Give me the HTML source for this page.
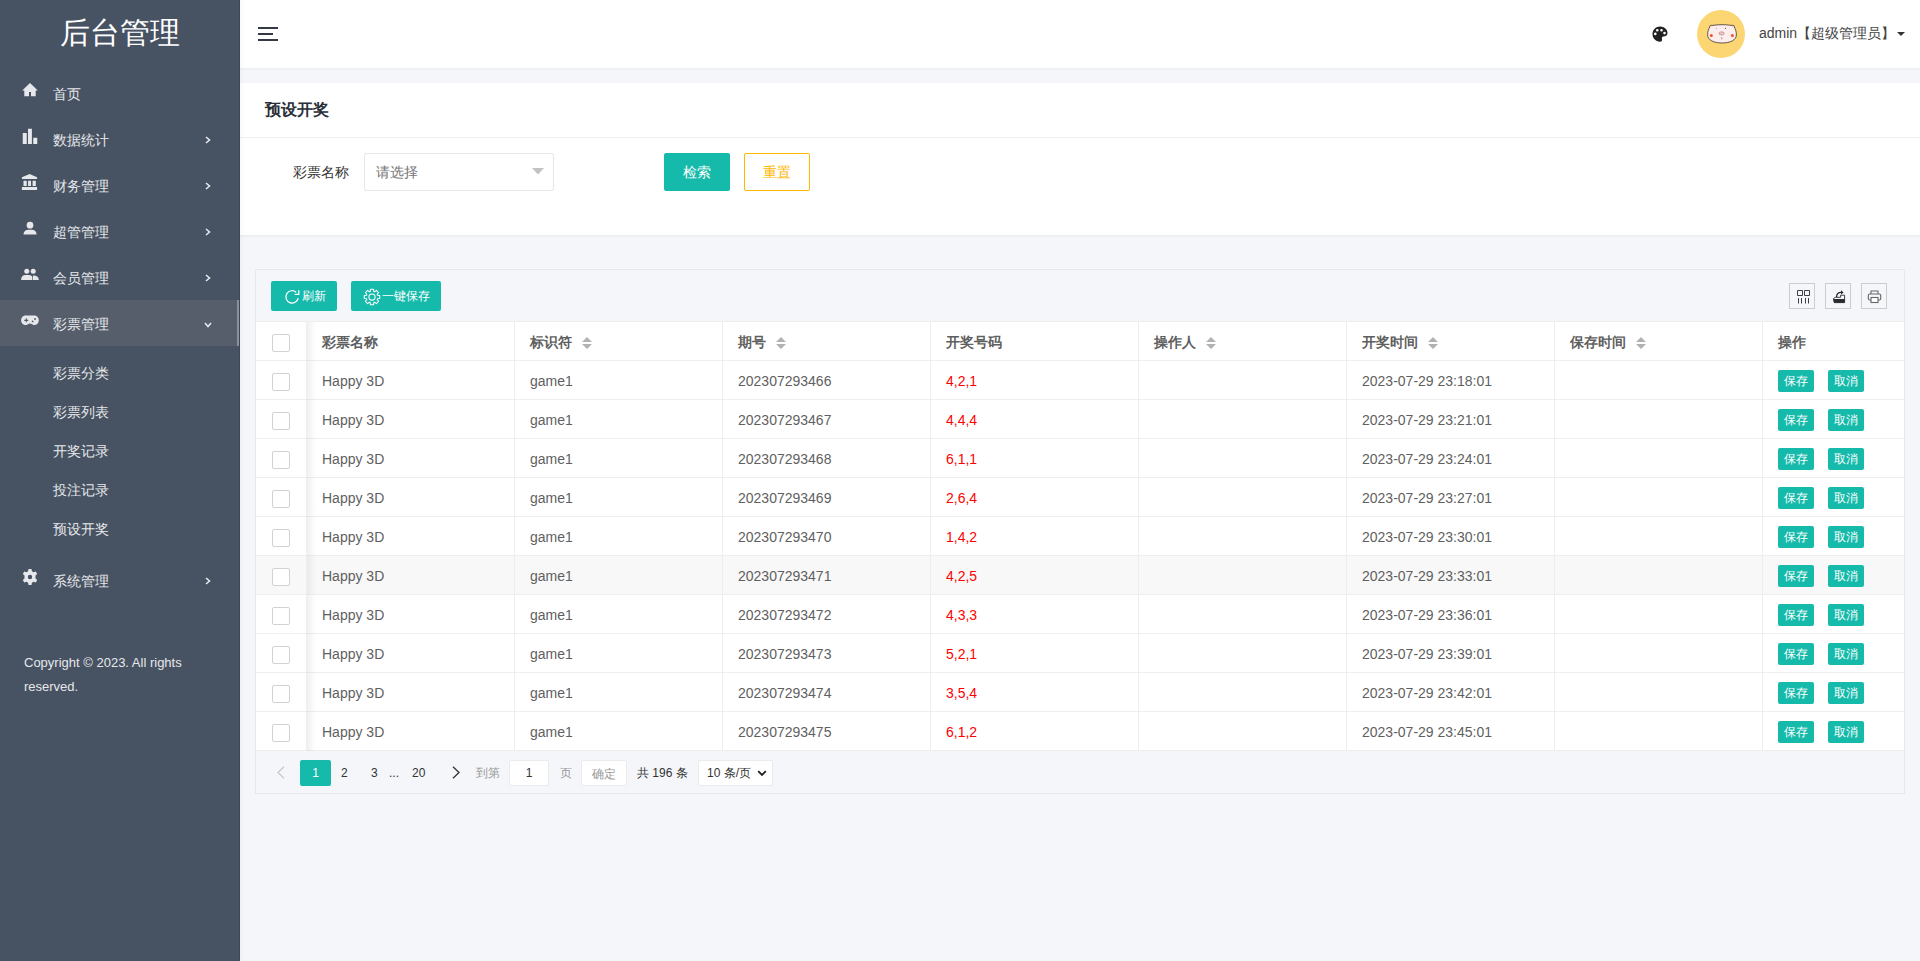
<!DOCTYPE html>
<html><head><meta charset="utf-8">
<style>
*{box-sizing:border-box;margin:0;padding:0}
html,body{width:1920px;height:961px;overflow:hidden}
body{font-family:"Liberation Sans",sans-serif;font-size:14px;color:#333;background:#f4f6fa;position:relative}
.abs{position:absolute}
#side{position:absolute;left:0;top:0;width:240px;height:961px;background:#475262;color:#e6e8eb}
#logo{position:absolute;left:0;top:0;width:240px;height:70px;text-align:center;line-height:66px;font-size:30px;color:#fff}
.mi{position:absolute;left:0;width:240px;height:46px;line-height:46px}
.mi .ic{position:absolute;left:22px;top:15px;width:18px;height:16px}
.mi .tx{position:absolute;left:53px;top:1px;font-size:14px;font-weight:500}
.mi .ar{position:absolute;left:205px;top:20px;width:6px;height:8px}
.act{background:#565e6c}
.act .bar{position:absolute;right:0;top:0;width:3px;height:46px;background:#8a919c}
.si{position:absolute;left:53px;height:39px;line-height:39px;font-size:14px;font-weight:500}
#copy{position:absolute;left:24px;top:651px;width:200px;font-size:13px;line-height:24px;color:#e6e8eb}
#hdr{position:absolute;left:240px;top:0;width:1680px;height:68px;background:#fff}
#card1{position:absolute;left:240px;top:83px;width:1680px;height:152px;background:#fff}
#card2{position:absolute;left:255px;top:269px;width:1650px;height:525px;border:1px solid #e8e8e8;background:#f4f6fa}
.btn{position:absolute;background:#16baaa;color:#fff;border-radius:2px;text-align:center;font-weight:500}
.tb{position:absolute;left:0;width:1648px;background:#fff}
.row{position:absolute;left:0;width:1648px;height:39px;border-bottom:1px solid #eee;background:#fff}
.cell{position:absolute;top:1px;height:38px;line-height:38px;color:#5f5f5f;white-space:nowrap}
.vl{position:absolute;top:0;width:1px;height:39px;background:#eee}
.th .cell{font-weight:bold;color:#5f5f5f}
.cb{position:absolute;left:16px;top:12px;width:18px;height:18px;border:1px solid #d2d2d2;border-radius:2px;background:#fff}
.sort{position:absolute;top:15px;width:10px;height:12px}
.red{color:#f00 !important}
.ob{position:absolute;top:9px;width:36px;height:22px;line-height:22px;font-size:12px;font-weight:500;background:#16baaa;color:#fff;border-radius:2px;text-align:center}
.hover{background:#f8f8f8}
.tool{position:absolute;top:13px;width:26px;height:26px;border:1px solid #ccc}
.pg{position:absolute;top:1px;height:42px;line-height:42px;font-size:12px;color:#333}
</style></head><body>

<div id="side">
  <div id="logo">后台管理</div>
  <!-- menu -->
  <div class="mi" style="top:70px">
    <svg class="ic" viewBox="0 0 18 16" style="left:22px;top:13px"><path d="M8 0.1 L15.8 7.4 H13.7 V13.3 H9 V9 H7 V13.3 H2.3 V7.4 H0.2 Z" fill="#e6e8eb"/></svg>
    <span class="tx">首页</span>
  </div>
  <div class="mi" style="top:116px">
    <svg class="ic" viewBox="0 0 18 16" style="top:12px"><rect x="0.75" y="5" width="4" height="11" fill="#e6e8eb"/><rect x="6" y="0.75" width="3.9" height="15.25" fill="#e6e8eb"/><rect x="11.25" y="9.75" width="4" height="6.25" fill="#e6e8eb"/></svg>
    <span class="tx">数据统计</span>
    <svg class="ar" viewBox="0 0 6 8"><path d="M1 1 L4.5 4 L1 7" stroke="#e6e8eb" stroke-width="1.6" fill="none"/></svg>
  </div>
  <div class="mi" style="top:162px">
    <svg class="ic" viewBox="0 0 18 16" style="left:21px;top:12px"><path d="M8.6 0 L16.1 3.2 V5.1 H0.9 V3.2 Z" fill="#e6e8eb"/><rect x="2.5" y="6.75" width="3.2" height="5.25" fill="#e6e8eb"/><rect x="7.1" y="6.75" width="2.9" height="5.25" fill="#e6e8eb"/><rect x="11.6" y="6.75" width="3.2" height="5.25" fill="#e6e8eb"/><rect x="0.9" y="13" width="15.2" height="3" fill="#e6e8eb"/></svg>
    <span class="tx">财务管理</span>
    <svg class="ar" viewBox="0 0 6 8"><path d="M1 1 L4.5 4 L1 7" stroke="#e6e8eb" stroke-width="1.6" fill="none"/></svg>
  </div>
  <div class="mi" style="top:208px">
    <svg class="ic" viewBox="0 0 18 16" style="top:13px"><circle cx="8" cy="4.2" r="3.35" fill="#e6e8eb"/><path d="M1.5 13.4 C1.5 10.4 3.5 8.7 6.5 8.7 H9.6 C12.6 8.7 14.6 10.4 14.6 13.4 Z" fill="#e6e8eb"/></svg>
    <span class="tx">超管管理</span>
    <svg class="ar" viewBox="0 0 6 8"><path d="M1 1 L4.5 4 L1 7" stroke="#e6e8eb" stroke-width="1.6" fill="none"/></svg>
  </div>
  <div class="mi" style="top:254px">
    <svg class="ic" viewBox="0 0 18 16" style="left:21px;top:14px"><circle cx="5.75" cy="3.3" r="2.5" fill="#e6e8eb"/><circle cx="12.2" cy="3.3" r="2.5" fill="#e6e8eb"/><path d="M0.1 12 C0.1 8.6 1.8 7 4.5 7 H7.8 C9.6 7 10.9 7.8 11.4 9 V12 Z" fill="#e6e8eb"/><path d="M12 12 V7.4 C15.6 7.2 17.8 8.8 17.8 12 Z" fill="#e6e8eb"/></svg>
    <span class="tx">会员管理</span>
    <svg class="ar" viewBox="0 0 6 8"><path d="M1 1 L4.5 4 L1 7" stroke="#e6e8eb" stroke-width="1.6" fill="none"/></svg>
  </div>
  <div class="mi act" style="top:300px">
    <svg class="ic" viewBox="0 0 18 16" style="left:21px;top:15px"><path d="M4.5 0.4 H13.3 C16 0.4 17.8 2.6 17.8 5.2 C17.8 8 15.8 10 13.3 10 C11.3 10 10.5 8.6 9 8.6 C7.5 8.6 6.7 10 4.7 10 C2.2 10 0.1 8 0.1 5.2 C0.1 2.6 2 0.4 4.5 0.4 Z" fill="#e6e8eb"/><path d="M3.2 5.4 H7.3 M5.3 3.3 V7.3" stroke="#565e6c" stroke-width="1.1"/><circle cx="11.6" cy="6.4" r="0.9" fill="#565e6c"/><circle cx="14" cy="4" r="0.95" fill="#565e6c"/></svg>
    <span class="tx">彩票管理</span>
    <svg class="ar" viewBox="0 0 8 6" style="left:204px;top:22px;width:8px;height:6px"><path d="M1 1 L4 4.5 L7 1" stroke="#e6e8eb" stroke-width="1.6" fill="none"/></svg>
    <div class="bar"></div>
  </div>
  <div class="si" style="top:354px">彩票分类</div>
  <div class="si" style="top:393px">彩票列表</div>
  <div class="si" style="top:432px">开奖记录</div>
  <div class="si" style="top:471px">投注记录</div>
  <div class="si" style="top:510px">预设开奖</div>
  <div class="mi" style="top:557px">
    <svg class="ic" viewBox="0 0 16 16" style="top:12px;width:16px;height:16px"><path fill="#e6e8eb" fill-rule="evenodd" d="M6.5 0 H9.5 L9.9 2.2 L11.6 3.2 L13.7 2.4 L15.2 5 L13.5 6.5 V9.5 L15.2 11 L13.7 13.6 L11.6 12.8 L9.9 13.8 L9.5 16 H6.5 L6.1 13.8 L4.4 12.8 L2.3 13.6 L0.8 11 L2.5 9.5 V6.5 L0.8 5 L2.3 2.4 L4.4 3.2 L6.1 2.2 Z M8 5.8 A2.2 2.2 0 1 0 8 10.2 A2.2 2.2 0 1 0 8 5.8 Z"/></svg>
    <span class="tx">系统管理</span>
    <svg class="ar" viewBox="0 0 6 8"><path d="M1 1 L4.5 4 L1 7" stroke="#e6e8eb" stroke-width="1.6" fill="none"/></svg>
  </div>
  <div class="abs" style="left:239px;top:0;width:1px;height:961px;background:#3e4757"></div>
  <div id="copy">Copyright © 2023. All rights reserved.</div>
</div>

<div id="hdr">
  <svg class="abs" style="left:18px;top:27px" width="20" height="14" viewBox="0 0 20 14"><rect x="0" y="0" width="20" height="2" fill="#333a44"/><rect x="0" y="6" width="15" height="2" fill="#333a44"/><rect x="0" y="12" width="20" height="2" fill="#333a44"/></svg>
  <svg class="abs" style="left:1412px;top:26px" width="16" height="16" viewBox="0 0 16 16"><path fill="#222" fill-rule="evenodd" d="M8 0.5 C12.5 0.5 15.5 3.5 15.5 7 C15.5 9.5 13.5 10.5 11.5 10.5 C10 10.5 9.5 11.5 10 13 C10.5 14.5 9.5 15.7 8 15.7 C3.5 15.7 0.5 12 0.5 8 C0.5 3.8 3.8 0.5 8 0.5 Z M3.3 6.6 A1.3 1.3 0 1 0 3.3 9.2 A1.3 1.3 0 1 0 3.3 6.6 Z M5.3 3 A1.3 1.3 0 1 0 5.3 5.6 A1.3 1.3 0 1 0 5.3 3 Z M9.5 3 A1.3 1.3 0 1 0 9.5 5.6 A1.3 1.3 0 1 0 9.5 3 Z M12.5 5.8 A1.3 1.3 0 1 0 12.5 8.4 A1.3 1.3 0 1 0 12.5 5.8 Z"/></svg>
  <div class="abs" style="left:1457px;top:10px;width:48px;height:48px;border-radius:50%;background:#fbd672"></div>
  <svg class="abs" style="left:1467px;top:23px" width="30" height="21" viewBox="0 0 30 21"><path d="M3.2 3.2 C7 1.2 23 1.2 26.8 3.2 C28.6 6 29.4 9 29.4 11.8 C29.4 17.2 23 20 15 20 C7 20 0.6 17.2 0.6 11.8 C0.6 9 1.4 6 3.2 3.2 Z" fill="#fdeeee" stroke="#3a2a2a" stroke-width="0.75"/><path d="M2.6 5 C2 3 3 1.8 5.6 2.3" fill="#f7d6d6" stroke="#3a2a2a" stroke-width="0.6"/><path d="M27.4 5 C28 3 27 1.8 24.4 2.3" fill="#f7d6d6" stroke="#3a2a2a" stroke-width="0.6"/><ellipse cx="14.6" cy="10.4" rx="2.6" ry="1.6" fill="#f4c4c4" stroke="#9a6a6a" stroke-width="0.5"/><circle cx="4.3" cy="12.6" r="1.5" fill="#f0522a"/><circle cx="25.4" cy="12.6" r="1.5" fill="#f0522a"/><circle cx="9.5" cy="5.2" r="0.45" fill="#555"/><circle cx="18.5" cy="5.2" r="0.55" fill="#333"/><path d="M14.4 14.5 C15.4 15 15 16.3 14.5 16" stroke="#333" stroke-width="0.6" fill="none"/></svg>
  <div class="abs" style="left:1519px;top:24px;line-height:18px;font-size:14px;color:#444">admin【超级管理员】</div>
  <svg class="abs" style="left:1657px;top:32px" width="8" height="4" viewBox="0 0 8 4"><path d="M0 0 H8 L4 4 Z" fill="#333"/></svg>
</div>

<div class="abs" style="left:240px;top:0;width:6px;height:961px;background:linear-gradient(to right,rgba(0,0,0,0.025),rgba(0,0,0,0));z-index:5"></div>
<div class="abs" style="left:240px;top:68px;width:1680px;height:2px;background:linear-gradient(to bottom,#eceef3,#f1f3f7)"></div>
<div id="card1">
  <div class="abs" style="left:25px;top:16px;font-size:16px;line-height:22px;color:#2a2f38;font-weight:bold">预设开奖</div>
  <div class="abs" style="left:0;top:54px;width:1680px;height:1px;background:#f2f2f2"></div>
  <div class="abs" style="left:53px;top:80px;line-height:18px;color:#333">彩票名称</div>
  <div class="abs" style="left:124px;top:70px;width:190px;height:38px;border:1px solid #e6e6e6;border-radius:2px;background:#fff">
    <span class="abs" style="left:11px;top:9px;line-height:18px;color:#757575">请选择</span>
    <svg class="abs" style="left:167px;top:14px" width="12" height="7" viewBox="0 0 12 7"><path d="M0 0 H12 L6 6.5 Z" fill="#c2c2c2"/></svg>
  </div>
  <div class="btn" style="left:424px;top:70px;width:66px;height:38px;line-height:38px">检索</div>
  <div class="abs" style="left:504px;top:70px;width:66px;height:38px;line-height:36px;border:1px solid #ffb800;border-radius:2px;color:#ffb800;text-align:center;background:#fff;font-weight:500">重置</div>
</div>

<div class="abs" style="left:240px;top:235px;width:1680px;height:3px;background:linear-gradient(to bottom,#eaecf0,#f4f6fa)"></div>
<div id="card2">
  <div class="btn" style="left:15px;top:11px;width:66px;height:30px;line-height:30px;font-size:12px">
    <svg class="abs" style="left:13px;top:8px" width="18" height="18" viewBox="0 0 18 18"><path d="M12.2 3.2 A6.2 6.2 0 1 0 14.2 9.1" stroke="#fff" stroke-width="1.25" fill="none"/><path d="M14.8 1.2 V5.3 H10.6" stroke="#fff" stroke-width="1.25" fill="none"/></svg>
    <span class="abs" style="left:31px;top:0">刷新</span>
  </div>
  <div class="btn" style="left:95px;top:11px;width:90px;height:30px;line-height:30px;font-size:12px">
    <svg class="abs" style="left:11px;top:6px" width="20" height="20" viewBox="0 0 20 20"><path fill="none" stroke="#fff" stroke-width="1.05" stroke-linejoin="round" d="M8.15 4.61 L8.43 2.26 L11.57 2.26 L11.85 4.61 L12.51 4.88 L14.36 3.42 L16.58 5.64 L15.12 7.49 L15.39 8.15 L17.74 8.43 L17.74 11.57 L15.39 11.85 L15.12 12.51 L16.58 14.36 L14.36 16.58 L12.51 15.12 L11.85 15.39 L11.57 17.74 L8.43 17.74 L8.15 15.39 L7.49 15.12 L5.64 16.58 L3.42 14.36 L4.88 12.51 L4.61 11.85 L2.26 11.57 L2.26 8.43 L4.61 8.15 L4.88 7.49 L3.42 5.64 L5.64 3.42 L7.49 4.88 Z"/><circle cx="10" cy="10" r="3.1" fill="none" stroke="#fff" stroke-width="1.05"/></svg>
    <span class="abs" style="left:31px;top:0">一键保存</span>
  </div>
  <div class="tool" style="left:1533px"><svg class="abs" style="left:6px;top:6px" width="15" height="15" viewBox="0 0 15 15"><path d="M1.5 0.5 H6.5 V5.5 H1.5 Z M8.5 0.5 H13.5 V5.5 H8.5 Z" fill="none" stroke="#3d3d4a" stroke-width="1"/><path d="M2.5 8 V13.5 M5.5 8 V13.5 M9.5 8 V13.5 M12.5 8 V13.5" stroke="#3d3d4a" stroke-width="1"/></svg></div>
  <div class="tool" style="left:1569px"><svg class="abs" style="left:5px;top:5px" width="16" height="16" viewBox="0 0 16 16"><path d="M2.4 9.6 L4.2 8.3 H9.6 V6.2 H13.6 V13.6 H3.2 Z" fill="none" stroke="#2a2a3a" stroke-width="0.9"/><path d="M2.3 10 H13.7 V13.8 H3.3 Z" fill="#2a2a2a"/><path d="M5.6 8 C5.4 4.8 7.4 3.3 10.4 3.4" fill="none" stroke="#2a2a2a" stroke-width="1.3"/><path d="M10 1.2 L12.6 3.4 L10 5.6 Z" fill="#2a2a2a"/></svg></div>
  <div class="tool" style="left:1605px"><svg class="abs" style="left:5px;top:5px" width="15" height="15" viewBox="0 0 15 15"><path d="M4 5 V2 H11 V5" fill="none" stroke="#666" stroke-width="1.1"/><rect x="1.3" y="5" width="12.4" height="6" rx="1.5" fill="none" stroke="#666" stroke-width="1.1"/><rect x="4" y="8.5" width="7" height="5" fill="#fff" stroke="#666" stroke-width="1.1"/></svg></div>

  <div class="abs" style="left:0;top:51px;width:1648px;height:1px;background:#eee"></div>
  <div id="tbl" class="abs" style="left:0;top:52px;width:1648px;height:429px;background:#fff">
<div class="row th" style="top:0"><div class="cb"></div><div class="cell" style="left:66px">彩票名称</div><div class="cell" style="left:274px">标识符</div><svg class="sort" style="left:326px" viewBox="0 0 10 12"><path d="M5 0 L10 5 H0 Z M0 7 H10 L5 12 Z" fill="#b2b2b2"/></svg><div class="cell" style="left:482px">期号</div><svg class="sort" style="left:520px" viewBox="0 0 10 12"><path d="M5 0 L10 5 H0 Z M0 7 H10 L5 12 Z" fill="#b2b2b2"/></svg><div class="cell" style="left:690px">开奖号码</div><div class="cell" style="left:898px">操作人</div><svg class="sort" style="left:950px" viewBox="0 0 10 12"><path d="M5 0 L10 5 H0 Z M0 7 H10 L5 12 Z" fill="#b2b2b2"/></svg><div class="cell" style="left:1106px">开奖时间</div><svg class="sort" style="left:1172px" viewBox="0 0 10 12"><path d="M5 0 L10 5 H0 Z M0 7 H10 L5 12 Z" fill="#b2b2b2"/></svg><div class="cell" style="left:1314px">保存时间</div><svg class="sort" style="left:1380px" viewBox="0 0 10 12"><path d="M5 0 L10 5 H0 Z M0 7 H10 L5 12 Z" fill="#b2b2b2"/></svg><div class="cell" style="left:1522px">操作</div><div class="vl" style="left:50px"></div><div class="vl" style="left:258px"></div><div class="vl" style="left:466px"></div><div class="vl" style="left:674px"></div><div class="vl" style="left:882px"></div><div class="vl" style="left:1090px"></div><div class="vl" style="left:1298px"></div><div class="vl" style="left:1506px"></div></div>
<div class="row" style="top:39px"><div class="cb"></div><div class="cell" style="left:66px">Happy 3D</div><div class="cell" style="left:274px">game1</div><div class="cell" style="left:482px">202307293466</div><div class="cell red" style="left:690px">4,2,1</div><div class="cell" style="left:1106px">2023-07-29 23:18:01</div><div class="ob" style="left:1522px">保存</div><div class="ob" style="left:1572px">取消</div><div class="vl" style="left:50px"></div><div class="vl" style="left:258px"></div><div class="vl" style="left:466px"></div><div class="vl" style="left:674px"></div><div class="vl" style="left:882px"></div><div class="vl" style="left:1090px"></div><div class="vl" style="left:1298px"></div><div class="vl" style="left:1506px"></div></div>
<div class="row" style="top:78px"><div class="cb"></div><div class="cell" style="left:66px">Happy 3D</div><div class="cell" style="left:274px">game1</div><div class="cell" style="left:482px">202307293467</div><div class="cell red" style="left:690px">4,4,4</div><div class="cell" style="left:1106px">2023-07-29 23:21:01</div><div class="ob" style="left:1522px">保存</div><div class="ob" style="left:1572px">取消</div><div class="vl" style="left:50px"></div><div class="vl" style="left:258px"></div><div class="vl" style="left:466px"></div><div class="vl" style="left:674px"></div><div class="vl" style="left:882px"></div><div class="vl" style="left:1090px"></div><div class="vl" style="left:1298px"></div><div class="vl" style="left:1506px"></div></div>
<div class="row" style="top:117px"><div class="cb"></div><div class="cell" style="left:66px">Happy 3D</div><div class="cell" style="left:274px">game1</div><div class="cell" style="left:482px">202307293468</div><div class="cell red" style="left:690px">6,1,1</div><div class="cell" style="left:1106px">2023-07-29 23:24:01</div><div class="ob" style="left:1522px">保存</div><div class="ob" style="left:1572px">取消</div><div class="vl" style="left:50px"></div><div class="vl" style="left:258px"></div><div class="vl" style="left:466px"></div><div class="vl" style="left:674px"></div><div class="vl" style="left:882px"></div><div class="vl" style="left:1090px"></div><div class="vl" style="left:1298px"></div><div class="vl" style="left:1506px"></div></div>
<div class="row" style="top:156px"><div class="cb"></div><div class="cell" style="left:66px">Happy 3D</div><div class="cell" style="left:274px">game1</div><div class="cell" style="left:482px">202307293469</div><div class="cell red" style="left:690px">2,6,4</div><div class="cell" style="left:1106px">2023-07-29 23:27:01</div><div class="ob" style="left:1522px">保存</div><div class="ob" style="left:1572px">取消</div><div class="vl" style="left:50px"></div><div class="vl" style="left:258px"></div><div class="vl" style="left:466px"></div><div class="vl" style="left:674px"></div><div class="vl" style="left:882px"></div><div class="vl" style="left:1090px"></div><div class="vl" style="left:1298px"></div><div class="vl" style="left:1506px"></div></div>
<div class="row" style="top:195px"><div class="cb"></div><div class="cell" style="left:66px">Happy 3D</div><div class="cell" style="left:274px">game1</div><div class="cell" style="left:482px">202307293470</div><div class="cell red" style="left:690px">1,4,2</div><div class="cell" style="left:1106px">2023-07-29 23:30:01</div><div class="ob" style="left:1522px">保存</div><div class="ob" style="left:1572px">取消</div><div class="vl" style="left:50px"></div><div class="vl" style="left:258px"></div><div class="vl" style="left:466px"></div><div class="vl" style="left:674px"></div><div class="vl" style="left:882px"></div><div class="vl" style="left:1090px"></div><div class="vl" style="left:1298px"></div><div class="vl" style="left:1506px"></div></div>
<div class="row hover" style="top:234px"><div class="cb"></div><div class="cell" style="left:66px">Happy 3D</div><div class="cell" style="left:274px">game1</div><div class="cell" style="left:482px">202307293471</div><div class="cell red" style="left:690px">4,2,5</div><div class="cell" style="left:1106px">2023-07-29 23:33:01</div><div class="ob" style="left:1522px">保存</div><div class="ob" style="left:1572px">取消</div><div class="vl" style="left:50px"></div><div class="vl" style="left:258px"></div><div class="vl" style="left:466px"></div><div class="vl" style="left:674px"></div><div class="vl" style="left:882px"></div><div class="vl" style="left:1090px"></div><div class="vl" style="left:1298px"></div><div class="vl" style="left:1506px"></div></div>
<div class="row" style="top:273px"><div class="cb"></div><div class="cell" style="left:66px">Happy 3D</div><div class="cell" style="left:274px">game1</div><div class="cell" style="left:482px">202307293472</div><div class="cell red" style="left:690px">4,3,3</div><div class="cell" style="left:1106px">2023-07-29 23:36:01</div><div class="ob" style="left:1522px">保存</div><div class="ob" style="left:1572px">取消</div><div class="vl" style="left:50px"></div><div class="vl" style="left:258px"></div><div class="vl" style="left:466px"></div><div class="vl" style="left:674px"></div><div class="vl" style="left:882px"></div><div class="vl" style="left:1090px"></div><div class="vl" style="left:1298px"></div><div class="vl" style="left:1506px"></div></div>
<div class="row" style="top:312px"><div class="cb"></div><div class="cell" style="left:66px">Happy 3D</div><div class="cell" style="left:274px">game1</div><div class="cell" style="left:482px">202307293473</div><div class="cell red" style="left:690px">5,2,1</div><div class="cell" style="left:1106px">2023-07-29 23:39:01</div><div class="ob" style="left:1522px">保存</div><div class="ob" style="left:1572px">取消</div><div class="vl" style="left:50px"></div><div class="vl" style="left:258px"></div><div class="vl" style="left:466px"></div><div class="vl" style="left:674px"></div><div class="vl" style="left:882px"></div><div class="vl" style="left:1090px"></div><div class="vl" style="left:1298px"></div><div class="vl" style="left:1506px"></div></div>
<div class="row" style="top:351px"><div class="cb"></div><div class="cell" style="left:66px">Happy 3D</div><div class="cell" style="left:274px">game1</div><div class="cell" style="left:482px">202307293474</div><div class="cell red" style="left:690px">3,5,4</div><div class="cell" style="left:1106px">2023-07-29 23:42:01</div><div class="ob" style="left:1522px">保存</div><div class="ob" style="left:1572px">取消</div><div class="vl" style="left:50px"></div><div class="vl" style="left:258px"></div><div class="vl" style="left:466px"></div><div class="vl" style="left:674px"></div><div class="vl" style="left:882px"></div><div class="vl" style="left:1090px"></div><div class="vl" style="left:1298px"></div><div class="vl" style="left:1506px"></div></div>
<div class="row" style="top:390px"><div class="cb"></div><div class="cell" style="left:66px">Happy 3D</div><div class="cell" style="left:274px">game1</div><div class="cell" style="left:482px">202307293475</div><div class="cell red" style="left:690px">6,1,2</div><div class="cell" style="left:1106px">2023-07-29 23:45:01</div><div class="ob" style="left:1522px">保存</div><div class="ob" style="left:1572px">取消</div><div class="vl" style="left:50px"></div><div class="vl" style="left:258px"></div><div class="vl" style="left:466px"></div><div class="vl" style="left:674px"></div><div class="vl" style="left:882px"></div><div class="vl" style="left:1090px"></div><div class="vl" style="left:1298px"></div><div class="vl" style="left:1506px"></div></div>
</div><!--tbl-->
  <div class="abs" style="left:51px;top:52px;width:9px;height:429px;background:linear-gradient(to right,rgba(0,0,0,0.055),rgba(0,0,0,0))"></div>
  <div class="abs" style="left:0;top:481px;width:1648px;height:42px;background:#f4f6fa">
    <svg class="abs" style="left:20px;top:15px" width="10" height="13" viewBox="0 0 10 13"><path d="M8 0.8 L2 6.5 L8 12.2" stroke="#c9c9c9" stroke-width="1.3" fill="none"/></svg>
    <div class="abs" style="left:44px;top:9px;width:31px;height:26px;line-height:26px;text-align:center;background:#16baaa;color:#fff;border-radius:2px;font-size:12px">1</div>
    <div class="pg" style="left:85px">2</div>
    <div class="pg" style="left:115px">3</div>
    <div class="pg" style="left:133px">...</div>
    <div class="pg" style="left:156px">20</div>
    <svg class="abs" style="left:195px;top:15px" width="10" height="13" viewBox="0 0 10 13"><path d="M2 0.8 L8 6.5 L2 12.2" stroke="#333" stroke-width="1.3" fill="none"/></svg>
    <div class="pg" style="left:220px;color:#999">到第</div>
    <div class="abs" style="left:253px;top:9px;width:40px;height:26px;background:#fff;border:1px solid #e9ebef;border-radius:2px;text-align:center;line-height:24px;font-size:12px;color:#333">1</div>
    <div class="pg" style="left:304px;color:#999">页</div>
    <div class="abs" style="left:325px;top:9px;width:46px;height:26px;background:#fff;border:1px solid #e9ebef;border-radius:2px;text-align:center;line-height:26px;font-size:12px;color:#999">确定</div>
    <div class="pg" style="left:381px">共 196 条</div>
    <div class="abs" style="left:442px;top:9px;width:75px;height:26px;background:#fff;border:1px solid #e9ebef;border-radius:2px;line-height:24px;font-size:12px;color:#333;padding-left:8px">10 条/页
      <svg class="abs" style="left:58px;top:9px" width="10" height="7" viewBox="0 0 10 7"><path d="M1.2 1.2 L5 5 L8.8 1.2" stroke="#222" stroke-width="1.9" fill="none"/></svg>
    </div>
  </div>
</div>

</body></html>
